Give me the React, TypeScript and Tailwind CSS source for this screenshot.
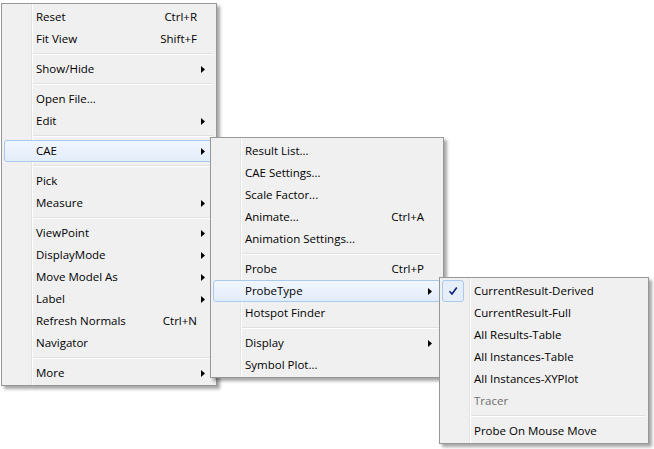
import React from 'react';

type Entry =
  | { sep: true }
  | {
      sep?: false;
      label: string;
      shortcut?: string;
      sub?: boolean;
      active?: boolean;
      checked?: boolean;
      disabled?: boolean;
    };

const SEP: Entry = { sep: true };

const mainMenu: Entry[] = [
  { label: 'Reset', shortcut: 'Ctrl+R' },
  { label: 'Fit View', shortcut: 'Shift+F' },
  SEP,
  { label: 'Show/Hide', sub: true },
  SEP,
  { label: 'Open File...' },
  { label: 'Edit', sub: true },
  SEP,
  { label: 'CAE', sub: true, active: true },
  SEP,
  { label: 'Pick' },
  { label: 'Measure', sub: true },
  SEP,
  { label: 'ViewPoint', sub: true },
  { label: 'DisplayMode', sub: true },
  { label: 'Move Model As', sub: true },
  { label: 'Label', sub: true },
  { label: 'Refresh Normals', shortcut: 'Ctrl+N' },
  { label: 'Navigator' },
  SEP,
  { label: 'More', sub: true },
];

const caeMenu: Entry[] = [
  { label: 'Result List...' },
  { label: 'CAE Settings...' },
  { label: 'Scale Factor...' },
  { label: 'Animate...', shortcut: 'Ctrl+A' },
  { label: 'Animation Settings...' },
  SEP,
  { label: 'Probe', shortcut: 'Ctrl+P' },
  { label: 'ProbeType', sub: true, active: true },
  { label: 'Hotspot Finder' },
  SEP,
  { label: 'Display', sub: true },
  { label: 'Symbol Plot...' },
];

const probeMenu: Entry[] = [
  { label: 'CurrentResult-Derived', checked: true },
  { label: 'CurrentResult-Full' },
  { label: 'All Results-Table' },
  { label: 'All Instances-Table' },
  { label: 'All Instances-XYPlot' },
  { label: 'Tracer', disabled: true },
  SEP,
  { label: 'Probe On Mouse Move' },
];

const MenuRow = ({ item }: { item: Exclude<Entry, { sep: true }> }) => (
  <div
    className={`flex h-[22px] items-center ${
      item.active
        ? 'rounded-[3px] border border-[#aac9ee] bg-[linear-gradient(to_bottom,#f1f6fd,#e3edfa)]'
        : 'border border-transparent'
    }`}
  >
    {/* icon / check gutter */}
    <div className="-ml-[1px] flex h-[22px] w-[32px] shrink-0 items-center">
      {item.checked && (
        <div className="flex h-[22px] w-[22px] items-center justify-center rounded-[3px] border border-[#aac9ee] bg-[#e6eefa]">
          <svg width="10" height="10" viewBox="0 0 10 10">
            <path d="M1.5 5.2 L4 8 L8.8 1.5" fill="none" stroke="#0d1e7a" strokeWidth="1.6" />
          </svg>
        </div>
      )}
    </div>
    <span className={`whitespace-nowrap ${item.disabled ? 'text-[#6d6d6d]' : 'text-black'}`}>
      {item.label}
    </span>
    {item.shortcut && (
      <span className="ml-auto mr-[16px] whitespace-nowrap text-black">{item.shortcut}</span>
    )}
    {item.sub && (
      <svg width="4" height="7" viewBox="0 0 4 7" className="ml-auto mr-[8px]">
        <path d="M0 0 L4 3.5 L0 7 Z" fill="#000" />
      </svg>
    )}
  </div>
);

const Menu = ({ items, className }: { items: Entry[]; className?: string }) => (
  <div
    className={`border border-[#979797] bg-[linear-gradient(to_right,#f0f0f0_29px,#e2e3e3_29px,#e2e3e3_30px,#ffffff_30px,#ffffff_31px,#f0f0f0_31px)] px-[2px] pt-[2px] pb-[1px] shadow-[3px_3px_3px_rgba(0,0,0,0.35)] ${className ?? ''}`}
  >
    {items.map((item, i) =>
      item.sep ? (
        <div key={i} className="flex h-[8px] flex-col justify-center pl-[29px] pr-[1px]">
          <div className="h-[1px] bg-[#e0e0e0]" />
          <div className="h-[1px] bg-white" />
        </div>
      ) : (
        <MenuRow key={i} item={item} />
      )
    )}
  </div>
);

export default function App() {
  return (
    <div
      className="relative h-[449px] w-[654px] overflow-hidden bg-white text-[11.5px] leading-none"
      style={{ fontFamily: '"Open Sans", "Noto Sans", sans-serif' }}
    >
      <Menu items={mainMenu} className="ml-[1px] mt-[3px] w-[216px]" />
      <Menu items={caeMenu} className="absolute left-[210px] top-[137px] w-[234px]" />
      <Menu items={probeMenu} className="absolute left-[439px] top-[277px] w-[210px]" />
    </div>
  );
}
